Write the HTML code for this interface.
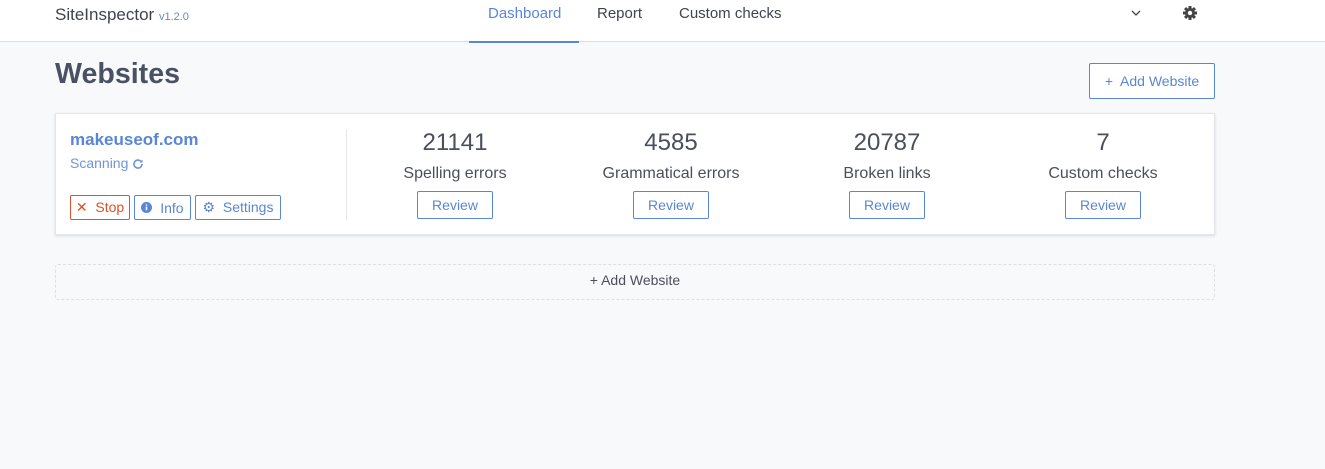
<!DOCTYPE html>
<html><head><meta charset="utf-8"><style>
*{box-sizing:border-box;margin:0;padding:0}
body{width:1325px;height:469px;background:#f8f9fb;font-family:"Liberation Sans",sans-serif;color:#4a4f5a;position:relative;overflow:hidden}
.hdr{position:absolute;left:0;top:0;width:1325px;height:42px;background:#fff;border-bottom:1px solid #dcdfe4}
.abs{position:absolute}
.btn{position:absolute;border:1px solid #5a86d6;color:#5a86d6;border-radius:2px;background:#fff;font-size:14px;display:flex;align-items:center;justify-content:center}
.col{position:absolute;top:129px;width:216px;text-align:center}
.num{font-size:24px;color:#4a4f5a;height:30px}
.lbl{font-size:16px;margin-top:6px;color:#4a4f5a}
.rev{width:76px;height:28px;margin:8px auto 0;border:1px solid #5a86d6;color:#5a86d6;font-size:14px;border-radius:2px;display:flex;align-items:center;justify-content:center;background:#fff}
</style></head><body>
<div class="hdr">
 <div class="abs" style="left:55px;top:5px;font-size:17px;color:#3f434c">SiteInspector <span style="font-size:11px;color:#6f86b0">v1.2.0</span></div>
 <div class="abs" style="left:488px;top:5px;font-size:15px;color:#5a86d6">Dashboard</div>
 <div class="abs" style="left:469px;top:41px;width:110px;height:2px;background:#5a86d6"></div>
 <div class="abs" style="left:597px;top:5px;font-size:15px;color:#3f434c">Report</div>
 <div class="abs" style="left:679px;top:5px;font-size:15px;color:#3f434c">Custom checks</div>
 <svg class="abs" style="left:1131px;top:9px" width="10" height="8" viewBox="0 0 10 8"><path d="M1 2l4 4 4-4" stroke="#444" stroke-width="1.3" fill="none"/></svg>
 <svg class="abs" style="left:1182px;top:5px" width="16" height="16" viewBox="0 0 16 16">
  <g fill="#444"><rect x="6.5" y="1" width="3" height="14"/><rect x="6.5" y="1" width="3" height="14" transform="rotate(45 8 8)"/><rect x="6.5" y="1" width="3" height="14" transform="rotate(90 8 8)"/><rect x="6.5" y="1" width="3" height="14" transform="rotate(135 8 8)"/><circle cx="8" cy="8" r="5"/></g>
  <circle cx="8" cy="8" r="2.2" fill="#fff"/></svg>
</div>
<div class="abs" style="left:55px;top:58px;font-size:28.6px;font-weight:bold;color:#4a5163">Websites</div>
<div class="btn" style="left:1089px;top:63px;width:126px;height:36px;font-size:14px">+&nbsp; Add Website</div>
<div class="abs" style="left:55px;top:113px;width:1160px;height:122px;background:#fff;border:1px solid #e3e5ea;box-shadow:0 1px 3px rgba(0,0,0,.12)"></div>
<div class="abs" style="left:70px;top:130px;font-size:17px;font-weight:bold;color:#5a86d6">makeuseof.com</div>
<div class="abs" style="left:70px;top:155px;font-size:14px;color:#6f95db">Scanning <svg width="12" height="12" viewBox="0 0 12 12" style="vertical-align:-2px"><path d="M10 6a4 4 0 1 1-1.2-2.8" stroke="#6f95db" stroke-width="1.6" fill="none"/><path d="M10.5 1.5v3h-3z" fill="#6f95db"/></svg></div>
<div class="btn" style="left:70px;top:195px;width:60px;height:25px;border-color:#d9502c;color:#d9502c">✕&nbsp; Stop</div>
<div class="btn" style="left:134px;top:195px;width:57px;height:25px"><svg width="11" height="11" viewBox="0 0 12 12"><circle cx="6" cy="6" r="6" fill="#5a86d6"/><rect x="5.2" y="5" width="1.6" height="4" fill="#fff"/><circle cx="6" cy="3.3" r="0.9" fill="#fff"/></svg>&nbsp; Info</div>
<div class="btn" style="left:195px;top:195px;width:86px;height:25px">⚙&nbsp; Settings</div>
<div class="abs" style="left:346px;top:129px;width:1px;height:91px;background:#e3e5ea"></div>
<div class="col" style="left:347px"><div class="num">21141</div><div class="lbl">Spelling errors</div><div class="rev">Review</div></div>
<div class="col" style="left:563px"><div class="num">4585</div><div class="lbl">Grammatical errors</div><div class="rev">Review</div></div>
<div class="col" style="left:779px"><div class="num">20787</div><div class="lbl">Broken links</div><div class="rev">Review</div></div>
<div class="col" style="left:995px"><div class="num">7</div><div class="lbl">Custom checks</div><div class="rev">Review</div></div>
<div class="abs" style="left:55px;top:264px;width:1160px;height:36px;border:1px dashed #dcdfe4;border-radius:3px;display:flex;align-items:center;justify-content:center;font-size:14px;color:#4a4f5a;padding-bottom:4px">+ Add Website</div>
</body></html>
